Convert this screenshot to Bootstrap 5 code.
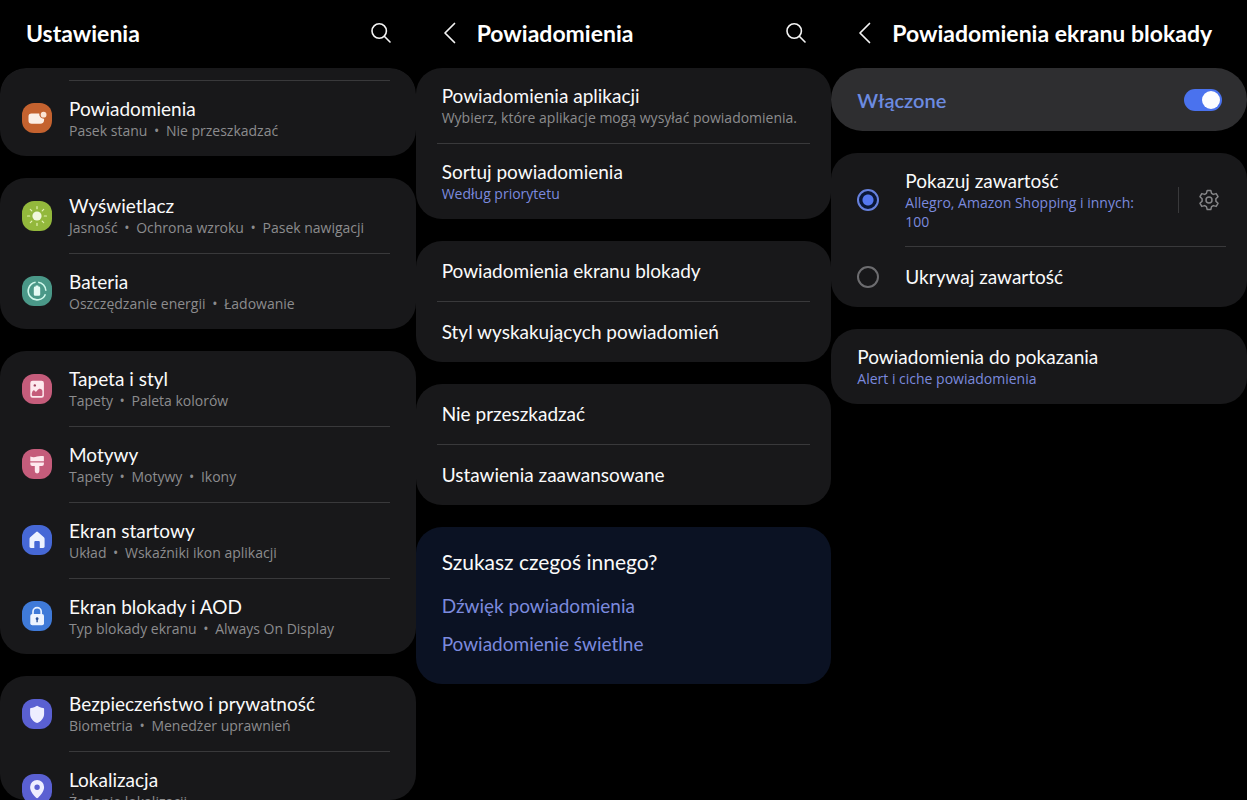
<!DOCTYPE html>
<html lang="pl" data-bs-theme="dark">
<head>
<meta charset="utf-8">
<meta name="viewport" content="width=device-width, initial-scale=1">
<title>Ustawienia</title>
<link href="https://cdn.jsdelivr.net/npm/bootstrap@5.3.0/dist/css/bootstrap.min.css" rel="stylesheet">
<style>
  :root { --panel: #18181a; --line: #39393b; --muted-text: #8c8c8e; --accent: #7b8ade; }
  body { background: #000; color: #fafafa; font-family: Lato, "Liberation Sans", sans-serif; font-size: 19px; line-height: 24px; }
  a { color: inherit; text-decoration: none; }
  svg { display: block; flex: none; }
  .screen { height: 100vh; min-width: 0; }
  .topbar { height: 68px; padding: 0 25px 2px 26px; flex: none; }
  .topbar h1, .topbar h2 { font-size: 23px; line-height: 28px; font-weight: 700; margin: 0; white-space: nowrap; }
  .bare { background: none; border: 0; padding: 0; color: inherit; }
  .back { width: 35px; flex: none; }
  .scroller { gap: 22px; min-height: 0; }
  .scroll-clip { overflow: hidden; border-radius: 26px; }
  .panel { background: var(--panel); border-radius: 26px; overflow: hidden; flex: none; }
  .panel-blue { background: #0b1223; padding: 23px 26px 28px; }
  .panel-blue a { color: var(--accent); }
  .panel-blue .ask { font-size: 21px; margin-bottom: 20px; }
  .links { gap: 14px; }
  .panel-on { background: #2e2e30; height: 63px; padding: 0 25px 0 26px; color: #6c8be0; font-size: 20px; font-weight: 600; border-radius: 32px; }
  .app-row { padding: 0 26px 0 22px; gap: 17px; }
  .plain-row { margin: 0 21px; padding: 0 5px; }
  .body-2 { height: 75px; }
  .body-1 { height: 60px; }
  .ruled { border-top: 1px solid var(--line); box-sizing: content-box; }
  .sub { font: 14px/19px "Open Sans", "Liberation Sans", sans-serif; color: var(--muted-text); white-space: nowrap; }
  .sub i { font-style: normal; margin: 0 3px; }
  .sub-accent { color: var(--accent); }
  .tail { height: 12px; }
  .pick-row { padding: 0 21px 0 26px; gap: 26px; }
  .tall { height: 93px; }
  .wraps { white-space: normal; max-width: 240px; }
  .gear { border-left: 1px solid var(--line); height: 26px; padding: 0 7px 0 20px; color: #858587; }
  .form-check-input.pick { width: 22px; height: 22px; margin: 0; border: 2px solid #6c6c6f; background-color: transparent; flex: none; }
  .form-check-input.pick:checked { border-color: #6680dc; background: #0a1738 radial-gradient(circle, #5578f0 5px, transparent 6px) border-box; }
  .form-check-input.flip { width: 38px; height: 22px; margin: 0; border: 0; border-radius: 11px; }
  .form-check-input.flip:checked { background-color: #4a72ee; background-size: 22px 22px; background-image: url("data:image/svg+xml,%3csvg xmlns='http://www.w3.org/2000/svg' viewBox='0 0 22 22'%3e%3ccircle cx='11' cy='11' r='9' fill='%23fcfcff'/%3e%3c/svg%3e"); }
</style>
</head>
<body>
<main class="container-fluid p-0">
  <div class="row g-0">

    <section class="col-4 screen d-flex flex-column">
      <header class="topbar d-flex align-items-center justify-content-between">
        <h1>Ustawienia</h1>
        <button class="bare" type="button" aria-label="Szukaj"><svg width="20" height="20" viewBox="0 0 20 20" fill="none" stroke="#f4f4f4" stroke-width="1.6" stroke-linecap="round"><circle cx="8.2" cy="8" r="7.2"/><path d="M13.3 13.2 19 19"/></svg></button>
      </header>
      <nav class="scroller scroll-clip d-flex flex-column flex-grow-1" aria-label="Kategorie ustawień">
        <div class="panel">
          <div class="tail"></div>
          <a href="#" class="app-row d-flex align-items-center">
            <svg width="30" height="30" viewBox="0 0 30 30"><rect width="30" height="30" rx="12" fill="#c4622f"/><path d="M9.500 10.500h7.800a4.600 4.600 0 0 0 4.800 5.200v1.100a4 4 0 0 1-4 4H9.700a3.200 3.200 0 0 1-3.200-3.200v-4a3 3 0 0 1 3-3.100Z" fill="#fbeee6"/><circle cx="21.600" cy="11.700" r="2.900" fill="#fbe3d3"/></svg>
            <div class="body-2 ruled flex-grow-1 d-flex flex-column justify-content-center"><span>Powiadomienia</span><span class="sub">Pasek stanu <i>•</i> Nie przeszkadzać</span></div>
          </a>
        </div>
        <div class="panel">
          <a href="#" class="app-row d-flex align-items-center">
            <svg width="30" height="30" viewBox="0 0 30 30"><rect width="30" height="30" rx="12" fill="#93b83c"/><circle cx="15" cy="15" r="4.6" fill="#f0f8dc"/><path d="M15 5.500v2.200M15 22.300v2.200M5.500 15h2.200M22.300 15h2.200M8.300 8.300l1.500 1.500M20.200 20.200l1.500 1.500M21.700 8.300l-1.500 1.500M9.800 20.200l-1.500 1.500" stroke="#e3f2b4" stroke-width="1.200" stroke-linecap="round"/></svg>
            <div class="body-2 flex-grow-1 d-flex flex-column justify-content-center"><span>Wyświetlacz</span><span class="sub">Jasność <i>•</i> Ochrona wzroku <i>•</i> Pasek nawigacji</span></div>
          </a>
          <a href="#" class="app-row d-flex align-items-center">
            <svg width="30" height="30" viewBox="0 0 30 30"><rect width="30" height="30" rx="12" fill="#4a9888"/><g fill="none" stroke="#d0f8ec" stroke-width="1.600"><path d="M16.200 6.200a8.900 8.900 0 0 1 7.700 8.500M23.400 18.200A8.900 8.900 0 1 1 13.600 6.200"/></g><path d="M13.700 10.600v-1h2.600v1h.6a1.300 1.300 0 0 1 1.300 1.300v6.600a1.300 1.300 0 0 1-1.300 1.300h-3.800a1.300 1.300 0 0 1-1.300-1.300v-6.600a1.300 1.300 0 0 1 1.300-1.300Z" fill="#e4faf4"/></svg>
            <div class="body-2 ruled flex-grow-1 d-flex flex-column justify-content-center"><span>Bateria</span><span class="sub">Oszczędzanie energii <i>•</i> Ładowanie</span></div>
          </a>
        </div>
        <div class="panel">
          <a href="#" class="app-row d-flex align-items-center">
            <svg width="30" height="30" viewBox="0 0 30 30"><rect width="30" height="30" rx="12" fill="#c55c7b"/><rect x="8.300" y="6.700" width="13.600" height="17" rx="2.300" fill="#fde9ee"/><circle cx="12.800" cy="11.400" r="1.200" fill="#a0405e"/><path d="M9.800 19.200c.8-3 2-3.700 3.400-2 .7.900 1.300.5 2-.6 1.600-2.600 4.300-2.500 5.200.2v4.300a1 1 0 0 1-1 1h-8.600a1 1 0 0 1-1-1Z" fill="#c55c7b"/></svg>
            <div class="body-2 flex-grow-1 d-flex flex-column justify-content-center"><span>Tapeta i styl</span><span class="sub">Tapety <i>•</i> Paleta kolorów</span></div>
          </a>
          <a href="#" class="app-row d-flex align-items-center">
            <svg width="30" height="30" viewBox="0 0 30 30"><rect width="30" height="30" rx="12" fill="#c55c7b"/><path d="M8.300 7.600c2.500.9 4.500.8 6.700 0s4.300-.9 6.900-.4v5H8.300Z" fill="#fde9ee"/><path d="M8.300 13.600h13.600v1.500a2 2 0 0 1-2 2h-2.500v5a2.300 2.300 0 0 1-4.600 0v-5h-2.500a2 2 0 0 1-2-2Z" fill="#fde9ee"/></svg>
            <div class="body-2 ruled flex-grow-1 d-flex flex-column justify-content-center"><span>Motywy</span><span class="sub">Tapety <i>•</i> Motywy <i>•</i> Ikony</span></div>
          </a>
          <a href="#" class="app-row d-flex align-items-center">
            <svg width="30" height="30" viewBox="0 0 30 30"><rect width="30" height="30" rx="12" fill="#4668d6"/><path d="m14.200 6.900-6 5.400c-.5.500-.7 1-.7 1.600v7.600c0 .8.600 1.400 1.400 1.400h3.400v-5.700c0-.8.500-1.300 1.300-1.300h2.900c.8 0 1.300.5 1.300 1.300v5.700h3.400c.8 0 1.400-.6 1.400-1.400v-7.600c0-.6-.2-1.100-.7-1.600l-6-5.400a1.300 1.300 0 0 0-1.700 0Z" fill="#edf2ff"/></svg>
            <div class="body-2 ruled flex-grow-1 d-flex flex-column justify-content-center"><span>Ekran startowy</span><span class="sub">Układ <i>•</i> Wskaźniki ikon aplikacji</span></div>
          </a>
          <a href="#" class="app-row d-flex align-items-center">
            <svg width="30" height="30" viewBox="0 0 30 30"><rect width="30" height="30" rx="12" fill="#3f7ad8"/><path d="M11 14v-3.300a4.100 4.100 0 0 1 8.200 0V14" fill="none" stroke="#e6f0ff" stroke-width="1.700"/><rect x="8.300" y="13" width="13.700" height="11.300" rx="2" fill="#edf4ff"/><path d="M15.100 16.200a1.500 1.500 0 0 1 .7 2.800v2.300h-1.400V19a1.500 1.500 0 0 1 .7-2.800Z" fill="#2c5298"/></svg>
            <div class="body-2 ruled flex-grow-1 d-flex flex-column justify-content-center"><span>Ekran blokady i AOD</span><span class="sub">Typ blokady ekranu <i>•</i> Always On Display</span></div>
          </a>
        </div>
        <div class="panel">
          <a href="#" class="app-row d-flex align-items-center">
            <svg width="30" height="30" viewBox="0 0 30 30"><rect width="30" height="30" rx="12" fill="#5a60d2"/><path d="M15.100 6.700c1.800 1.300 4 2 6.100 2.200.5 0 .9.400.9.900v5.100c0 4.200-3.200 7.600-7 9.200-3.800-1.600-7-5-7-9.200V9.800c0-.5.4-.9.900-.9 2.100-.2 4.300-.9 6.100-2.200Z" fill="#eeeeff"/></svg>
            <div class="body-2 flex-grow-1 d-flex flex-column justify-content-center"><span>Bezpieczeństwo i prywatność</span><span class="sub">Biometria <i>•</i> Menedżer uprawnień</span></div>
          </a>
          <a href="#" class="app-row d-flex align-items-center">
            <svg width="30" height="30" viewBox="0 0 30 30"><rect width="30" height="30" rx="12" fill="#5a60d2"/><path fill-rule="evenodd" d="M15.100 6a7 7 0 0 1 7 7c0 4.600-3.700 8.300-6 10.800-.6.600-1.400.6-2 0-2.300-2.500-6-6.200-6-10.800a7 7 0 0 1 7-7Zm0 4.500a2.700 2.700 0 1 0 0 5.400 2.700 2.700 0 0 0 0-5.400Z" fill="#eeeeff"/></svg>
            <div class="body-2 ruled flex-grow-1 d-flex flex-column justify-content-center"><span>Lokalizacja</span><span class="sub">Żądanie lokalizacji</span></div>
          </a>
        </div>
      </nav>
    </section>

    <section class="col-4 screen d-flex flex-column">
      <header class="topbar d-flex align-items-center">
        <button class="bare back" type="button" aria-label="Wstecz"><svg width="14" height="22" viewBox="0 0 14 22" fill="none" stroke="#f4f4f4" stroke-width="1.700" stroke-linecap="round" stroke-linejoin="round"><path d="M12.500 1.500 3 11l9.500 9.500"/></svg></button>
        <h2 class="flex-grow-1">Powiadomienia</h2>
        <button class="bare" type="button" aria-label="Szukaj"><svg width="20" height="20" viewBox="0 0 20 20" fill="none" stroke="#f4f4f4" stroke-width="1.6" stroke-linecap="round"><circle cx="8.2" cy="8" r="7.2"/><path d="M13.3 13.2 19 19"/></svg></button>
      </header>
      <div class="scroller d-flex flex-column">
        <div class="panel">
          <a href="#" class="plain-row body-2 d-flex flex-column justify-content-center"><span>Powiadomienia aplikacji</span><span class="sub">Wybierz, które aplikacje mogą wysyłać powiadomienia.</span></a>
          <a href="#" class="plain-row body-2 ruled d-flex flex-column justify-content-center"><span>Sortuj powiadomienia</span><span class="sub sub-accent">Według priorytetu</span></a>
        </div>
        <div class="panel">
          <a href="#" class="plain-row body-1 d-flex align-items-center">Powiadomienia ekranu blokady</a>
          <a href="#" class="plain-row body-1 ruled d-flex align-items-center">Styl wyskakujących powiadomień</a>
        </div>
        <div class="panel">
          <a href="#" class="plain-row body-1 d-flex align-items-center">Nie przeszkadzać</a>
          <a href="#" class="plain-row body-1 ruled d-flex align-items-center">Ustawienia zaawansowane</a>
        </div>
        <div class="panel panel-blue">
          <div class="ask">Szukasz czegoś innego?</div>
          <div class="links d-flex flex-column align-items-start">
            <a href="#">Dźwięk powiadomienia</a>
            <a href="#">Powiadomienie świetlne</a>
          </div>
        </div>
      </div>
    </section>

    <section class="col-4 screen d-flex flex-column">
      <header class="topbar d-flex align-items-center">
        <button class="bare back" type="button" aria-label="Wstecz"><svg width="14" height="22" viewBox="0 0 14 22" fill="none" stroke="#f4f4f4" stroke-width="1.700" stroke-linecap="round" stroke-linejoin="round"><path d="M12.500 1.500 3 11l9.500 9.500"/></svg></button>
        <h2>Powiadomienia ekranu blokady</h2>
      </header>
      <div class="scroller d-flex flex-column">
        <div class="panel panel-on form-switch d-flex align-items-center justify-content-between">
          <label for="lock-on">Włączone</label>
          <input class="form-check-input flip" type="checkbox" role="switch" id="lock-on" checked>
        </div>
        <div class="panel">
          <div class="pick-row d-flex align-items-center">
            <input class="form-check-input pick" type="radio" name="content" id="show" checked>
            <label for="show" class="tall flex-grow-1 d-flex flex-column justify-content-center"><span>Pokazuj zawartość</span><span class="sub sub-accent wraps">Allegro, Amazon Shopping i innych: 100</span></label>
            <button class="bare gear" type="button" aria-label="Ustawienia zawartości"><svg width="20" height="22" viewBox="0 0 20 22" fill="none" stroke="currentColor" stroke-width="1.500" stroke-linejoin="round"><path d="M8.200 1.500h3.600l.8 2.900 1.700 1 2.900-.8 1.800 3.100-2.100 2.100v2.400l2.100 2.100-1.800 3.100-2.900-.8-1.700 1-.8 2.900H8.200l-.8-2.900-1.700-1-2.900.8L1 14.300l2.100-2.100V9.800L1 7.700l1.800-3.100 2.900.8 1.700-1Z"/><circle cx="10" cy="11" r="3"/></svg></button>
          </div>
          <div class="pick-row d-flex align-items-center">
            <input class="form-check-input pick" type="radio" name="content" id="hide">
            <label for="hide" class="body-1 ruled flex-grow-1 d-flex align-items-center">Ukrywaj zawartość</label>
          </div>
        </div>
        <div class="panel">
          <a href="#" class="plain-row body-2 d-flex flex-column justify-content-center"><span>Powiadomienia do pokazania</span><span class="sub sub-accent">Alert i ciche powiadomienia</span></a>
        </div>
      </div>
    </section>

  </div>
</main>
<script src="https://cdn.jsdelivr.net/npm/bootstrap@5.3.0/dist/js/bootstrap.bundle.min.js"></script>
</body>
</html>
